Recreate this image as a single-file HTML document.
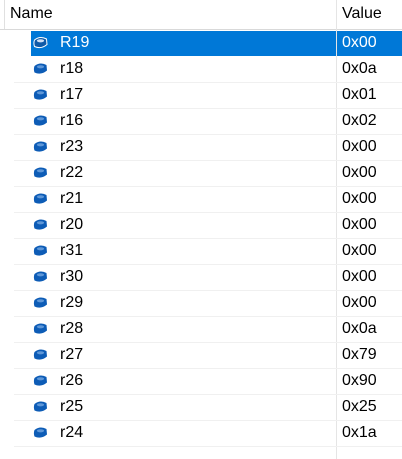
<!DOCTYPE html>
<html><head><style>
body{margin:0;width:402px;height:459px;background:#fff;font-family:"Liberation Sans",sans-serif;font-size:16px;color:#000;position:relative;overflow:hidden}
.h{position:absolute;top:0;left:0;width:402px;height:29px;border-bottom:1px solid #d9d9d9}
.t{position:absolute;white-space:nowrap}
.row{position:absolute;left:14px;width:388px;height:26px;border-bottom:1px solid #f0f0f0;box-sizing:border-box}
.sel{position:absolute;left:31px;width:371px;height:25px;background:#0078d7}
.vl{position:absolute;top:0;left:336px;width:1px;height:459px;background:#e5e5e5}
</style></head><body>
<div class="h"></div>
<div style="position:absolute;left:4px;top:0;width:1px;height:29px;background:#e0e0e0"></div>
<div class="t" style="left:10px;top:5px">Name</div>
<div class="t" style="left:342px;top:5px">Value</div>
<div class="sel" style="top:31px"></div>
<div class="vl"></div>
<div id="rows"></div>
<script>
var d=[["R19","0x00"],["r18","0x0a"],["r17","0x01"],["r16","0x02"],["r23","0x00"],["r22","0x00"],["r21","0x00"],["r20","0x00"],["r31","0x00"],["r30","0x00"],["r29","0x00"],["r28","0x0a"],["r27","0x79"],["r26","0x90"],["r25","0x25"],["r24","0x1a"]];
var h="";
d.forEach(function(r,i){var y=30+i*26;var s=i==0;var c=s?"#fff":"#000";
if(!s)h+='<div class="row" style="top:'+(y+1)+'px"></div>';
h+='<svg style="position:absolute;left:33px;top:'+(y+6)+'px" width="15" height="13" viewBox="0 0 15 13"><path d="M1.5 4 Q7 -0.5 13.5 3 L14 8.5 Q8 13.5 1.5 10.5 Q0.3 7 1.5 4Z" fill="'+(s?"#0f5aa8":"#0d5cb6")+'" stroke="'+(s?"#fff":"none")+'" stroke-width="1"/><ellipse cx="7.5" cy="4.8" rx="3.6" ry="1.6" fill="'+(s?"#cfe0f5":"#5e97d8")+'"/></svg>';
h+='<div class="t" style="left:60px;top:'+(y+4)+'px;color:'+c+'">'+r[0]+'</div>';
h+='<div class="t" style="left:342px;top:'+(y+4)+'px;color:'+c+'">'+r[1]+'</div>';});
document.getElementById("rows").innerHTML=h;
</script>
</body></html>
